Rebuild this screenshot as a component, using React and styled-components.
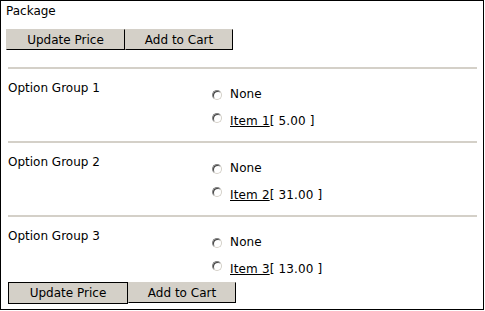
import React from "react"
import styled, { createGlobalStyle } from "styled-components"

let Global = createGlobalStyle`
  body {
    margin: 0;
    background: #fff;
    font-family: "DejaVu Sans", Verdana, sans-serif;
    font-size: 12px;
    color: #000;
  }
`

let Frame = styled.div`
  box-sizing: border-box;
  width: 484px;
  height: 310px;
  border: 1px solid #000;
  padding: 3px 0 0 0;
`

let Title = styled.div`
  padding-left: 5px;
  line-height: 15px;
`

let ButtonBar = styled.div`
  display: flex;
  padding-left: ${(p) => p.$inset}px;
  margin-top: ${(p) => p.$top}px;
`

let Button = styled.button`
  box-sizing: border-box;
  width: ${(p) => p.$width}px;
  height: ${(p) => (p.$default ? 22 : 21)}px;
  margin: 0;
  padding: 0;
  font-family: "DejaVu Sans", Verdana, sans-serif;
  font-size: 12px;
  color: #000;
  background: #d4d0c8;
  border: 1px solid;
  border-color: ${(p) => (p.$default ? "#000" : "#d4d0c8 #000 #000 #d4d0c8")};
  border-radius: 0;
`

let Spacer = styled.div`
  height: 17px;
`

let Rule = styled.div`
  height: 2px;
  margin: 0 6px 0 7px;
  background: #d4d0c8;
`

let Group = styled.div`
  display: grid;
  grid-template-columns: 202px 1fr;
  padding: 12px 0 0 7px;
  height: ${(p) => (p.$last ? 65 : 72)}px;
  box-sizing: border-box;
`

let Label = styled.div`
  line-height: 15px;
`

let Options = styled.div`
  display: flex;
  flex-direction: column;
  gap: 12px;
  padding-top: 6px;
`

let Option = styled.div`
  display: flex;
  align-items: center;
  line-height: 15px;
  letter-spacing: 0.15px;
`

let Radio = styled.span`
  box-sizing: border-box;
  width: 10px;
  height: 10px;
  margin: 0 8px 0 2px;
  border-radius: 50%;
  border: 1px solid;
  border-color: #808080 #d4d0c8 #d4d0c8 #808080;
  background: #fff;
  box-shadow: inset 1px 1px 0 #404040;
  position: relative;
  top: ${(p) => (p.$raised ? -4 : 0)}px;
`

let ItemLink = styled.a`
  color: #000;
  text-decoration: underline;
`

let groups = [
  { name: "Option Group 1", item: "Item 1", price: "5.00" },
  { name: "Option Group 2", item: "Item 2", price: "31.00" },
  { name: "Option Group 3", item: "Item 3", price: "13.00" },
]

let App = () => (
  <React.Fragment>
    <Global />
    <Frame>
      <Title>Package</Title>
      <ButtonBar $inset={5} $top={10}>
        <Button $width={119}>Update Price</Button>
        <Button $width={108}>Add to Cart</Button>
      </ButtonBar>
      <Spacer />
      {groups.map((g, i) => (
        <React.Fragment key={g.name}>
          <Rule />
          <Group $last={i === groups.length - 1}>
            <Label>{g.name}</Label>
            <Options>
              <Option>
                <Radio />
                None
              </Option>
              <Option>
                <Radio $raised />
                <ItemLink href="#">{g.item}</ItemLink>[ {g.price} ]
              </Option>
            </Options>
          </Group>
        </React.Fragment>
      ))}
      <ButtonBar $inset={7} $top={0}>
        <Button $width={120} $default>
          Update Price
        </Button>
        <Button $width={108}>Add to Cart</Button>
      </ButtonBar>
    </Frame>
  </React.Fragment>
)

export default App
